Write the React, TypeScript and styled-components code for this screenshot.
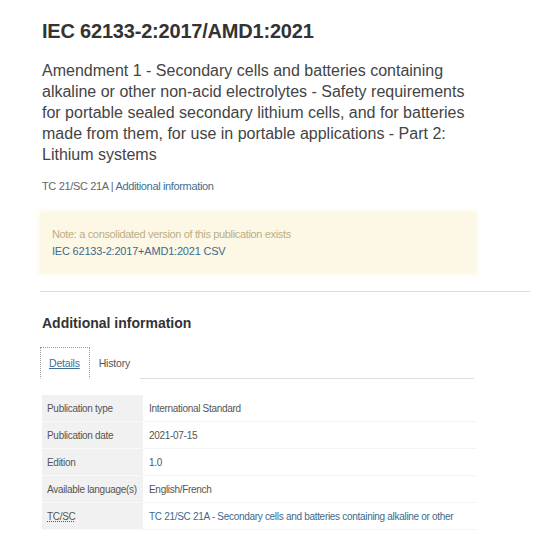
import React from "react";
import styled, { createGlobalStyle } from "styled-components";

const Global = createGlobalStyle`
  html, body { margin: 0; padding: 0; background: #fff; }
  body { font-family: "Liberation Sans", Arial, sans-serif; color: #333; }
`;

const Page = styled.div`
  padding: 19px 24px 0 42px;
`;

const Title = styled.h1`
  margin: 0;
  font-size: 20px;
  line-height: 24px;
  font-weight: bold;
  letter-spacing: -0.2px;
  color: #333;
`;

const Subtitle = styled.p`
  margin: 17px 0 0;
  font-size: 16px;
  line-height: 21px;
  color: #444;
  width: 440px;
`;

const Meta = styled.div`
  margin-top: 14px;
  font-size: 11px;
  line-height: 14px;
  color: #666;
  letter-spacing: -0.35px;
`;

const Link = styled.a`
  color: #3f6f91;
  text-decoration: none;
`;

const Note = styled.div`
  margin: 19px 0 0 -2px;
  width: 436px;
  box-sizing: border-box;
  background: #fdf8e6;
  padding: 14px 12px 13px;
  font-size: 11px;
  line-height: 17px;
  box-shadow: 0 0 4px 2px rgba(253, 248, 230, 0.8);
`;

const NoteText = styled.div`
  color: #bcae82;
  letter-spacing: -0.35px;
`;

const NoteLink = styled(Link)`
  display: block;
  color: #40698c;
  letter-spacing: -0.2px;
`;

const Rule = styled.hr`
  margin: 18px 0 0 -2px;
  border: none;
  border-top: 1px solid #ddd;
  width: 490px;
`;

const SectionTitle = styled.h2`
  margin: 23px 0 0;
  font-size: 14px;
  line-height: 17px;
  font-weight: bold;
  color: #333;
`;

const TabBar = styled.div`
  margin: 15px 0 0 -2px;
  display: flex;
  align-items: flex-end;
  width: 434px;
  border-bottom: 1px solid #ddd;
`;

const Tab = styled.div<{ $active?: boolean }>`
  height: 32px;
  box-sizing: border-box;
  display: flex;
  align-items: center;
  padding: 0 9px 0 8px;
  font-size: 10.5px;
  letter-spacing: -0.2px;
  margin-bottom: -1px;
  color: ${(p) => (p.$active ? "#3f6f91" : "#555")};
  text-decoration: ${(p) => (p.$active ? "underline" : "none")};
  border: ${(p) => (p.$active ? "1px dotted #999" : "1px solid transparent")};
  border-bottom: ${(p) => (p.$active ? "1px solid #fff" : "1px solid transparent")};
  background: #fff;
`;

const Table = styled.div`
  margin-top: 16px;
  display: grid;
  grid-template-columns: 101px 1fr;
  width: 434px;
  font-size: 10px;
  letter-spacing: -0.3px;
`;

const Label = styled.div`
  height: 27px;
  box-sizing: border-box;
  display: flex;
  align-items: center;
  padding-left: 5px;
  background: #f1f1f1;
  border-bottom: 1px solid #f9f9f9;
  color: #555;
  white-space: nowrap;
`;

const Value = styled.div<{ $link?: boolean }>`
  height: 27px;
  box-sizing: border-box;
  display: flex;
  align-items: center;
  padding-left: 6px;
  border-bottom: 1px solid #f4f4f4;
  color: ${(p) => (p.$link ? "#40698c" : "#555")};
  white-space: nowrap;
  overflow: hidden;
`;

const Abbr = styled.abbr`
  text-decoration: underline dotted;
  color: #555;
`;

const rows: [React.ReactNode, string, boolean?][] = [
  ["Publication type", "International Standard"],
  ["Publication date", "2021-07-15"],
  ["Edition", "1.0"],
  ["Available language(s)", "English/French"],
  [<Abbr key="a">TC/SC</Abbr>, "TC 21/SC 21A - Secondary cells and batteries containing alkaline or other", true],
];

export default function App() {
  return (
    <>
      <Global />
      <Page>
        <Title>IEC 62133-2:2017/AMD1:2021</Title>
        <Subtitle>
          Amendment 1 - Secondary cells and batteries containing alkaline or other non-acid
          electrolytes - Safety requirements for portable sealed secondary lithium cells, and for
          batteries made from them, for use in portable applications - Part 2: Lithium systems
        </Subtitle>
        <Meta>
          TC 21/SC 21A | <Link href="#">Additional information</Link>
        </Meta>
        <Note>
          <NoteText>Note: a consolidated version of this publication exists</NoteText>
          <NoteLink href="#">IEC 62133-2:2017+AMD1:2021 CSV</NoteLink>
        </Note>
        <Rule />
        <SectionTitle>Additional information</SectionTitle>
        <TabBar>
          <Tab $active>Details</Tab>
          <Tab>History</Tab>
        </TabBar>
        <Table>
          {rows.map(([l, v, link], i) => (
            <React.Fragment key={i}>
              <Label>{l}</Label>
              <Value $link={link}>{v}</Value>
            </React.Fragment>
          ))}
        </Table>
      </Page>
    </>
  );
}
